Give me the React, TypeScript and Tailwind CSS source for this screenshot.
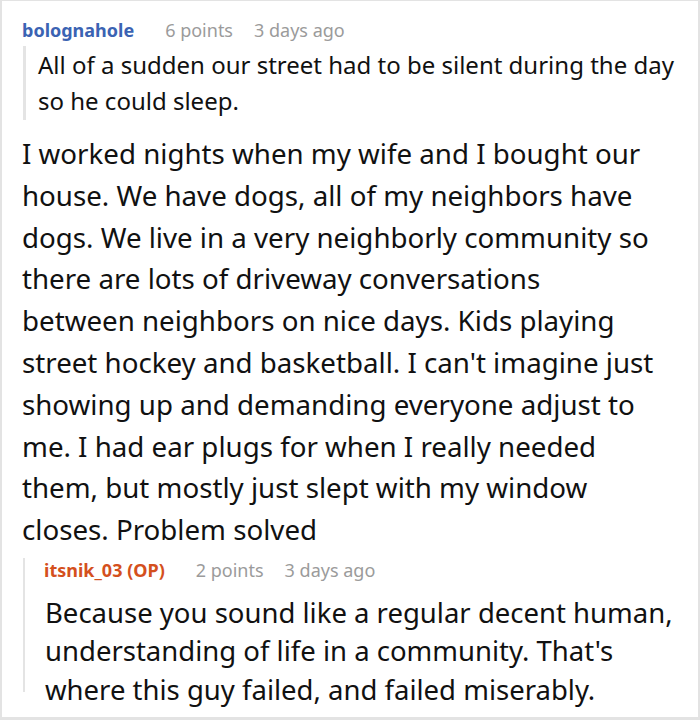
import React from 'react';

// Line breaks kept as the comment was laid out
const replyLines = [
  'I worked nights when my wife and I bought our',
  'house. We have dogs, all of my neighbors have',
  'dogs. We live in a very neighborly community so',
  'there are lots of driveway conversations',
  'between neighbors on nice days. Kids playing',
  "street hockey and basketball. I can't imagine just",
  'showing up and demanding everyone adjust to',
  'me. I had ear plugs for when I really needed',
  'them, but mostly just slept with my window',
  'closes. Problem solved',
];

const opLines = [
  'Because you sound like a regular decent human,',
  "understanding of life in a community. That's",
  'where this guy failed, and failed miserably.',
];

function Meta({ name, color, points, age }: { name: string; color: string; points: string; age: string }) {
  return (
    <div className="flex h-[24px] items-center text-[18px] leading-[24px] whitespace-nowrap">
      <span className={`font-bold ${color}`}>{name}</span>
      <span className="ml-[31px] text-[#9b9b9b]">{points}</span>
      <span className="ml-[21px] text-[#9b9b9b]">{age}</span>
    </div>
  );
}

export default function App() {
  return (
    <div className="h-[720px] w-[700px] overflow-hidden border-t border-r-2 border-l-2 border-b-[3px] border-[#e3e3e3] bg-white font-['Noto_Sans',sans-serif] text-[#111]">
      <div className="pl-[20px] pt-[17px]">
        <Meta name="bolognahole" color="text-[#3b63b3]" points="6 points" age="3 days ago" />
        <div className="ml-[1px] mt-[4px] border-l-[3px] border-[#e4e4e4] py-[1px] pl-[12px] text-[24px] leading-[36px]">
          <div>All of a sudden our street had to be silent during the day</div>
          <div>so he could sleep.</div>
        </div>
        <div className="mt-[13px] text-[27.7px] leading-[41.8px] whitespace-nowrap">
          {replyLines.map((line, i) => (
            <div key={i}>{line}</div>
          ))}
        </div>
        <div className="ml-[1px] mt-[17px] h-[134px] border-l-2 border-[#e4e4e4] pl-[20px]">
          <div className="-ml-[1px] -mt-[10px]">
            <Meta name="itsnik_03 (OP)" color="text-[#d4501d]" points="2 points" age="3 days ago" />
          </div>
          <div className="mt-[12px] text-[27.5px] leading-[38.5px] whitespace-nowrap">
            {opLines.map((line, i) => (
              <div key={i}>{line}</div>
            ))}
          </div>
        </div>
      </div>
    </div>
  );
}
